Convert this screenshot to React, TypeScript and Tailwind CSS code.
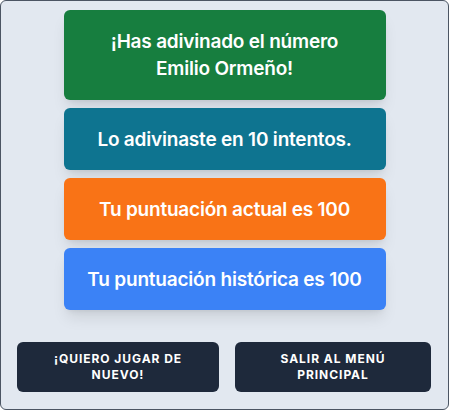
import React from "react";

export default function App() {
  const cards = [
    { text: <>¡Has adivinado el número<br />Emilio Ormeño!</>, bg: "bg-[#177e3f]", h: "h-[90px]" },
    { text: <>Lo adivinaste en 10 intentos.</>, bg: "bg-[#0e7490]", h: "h-[62px]" },
    { text: <>Tu puntuación actual es 100</>, bg: "bg-[#f97316]", h: "h-[62px]" },
    { text: <>Tu puntuación histórica es 100</>, bg: "bg-[#3b82f6]", h: "h-[62px]" },
  ];
  return (
    <div className="w-[449px] h-[410px] bg-white" style={{ fontFamily: "Inter, 'Noto Sans', sans-serif" }}>
      <div className="w-[449px] h-[410px] bg-[#e2e8f0] border border-[#4b5563] rounded-[6px] flex flex-col items-center px-4 pt-[9px]">
        <div className="flex flex-col gap-2 w-[322px]">
          {cards.map((c, i) => (
            <div
              key={i}
              className={`${c.bg} ${c.h} rounded-md shadow-lg flex items-center justify-center text-center text-white text-[19px] leading-[27px] font-semibold tracking-[-0.2px]`}
            >
              <div>{c.text}</div>
            </div>
          ))}
        </div>
        <div className="flex gap-4 w-full mt-[32px]">
          <button className="w-[202px] h-[50px] bg-[#1e293b] rounded-md text-white text-[12px] leading-4 font-bold uppercase tracking-[0.08em]">
            ¡Quiero jugar de<br />nuevo!
          </button>
          <button className="w-[196px] h-[50px] bg-[#1e293b] rounded-md text-white text-[12px] leading-4 font-bold uppercase tracking-[0.08em]">
            Salir al menú<br />principal
          </button>
        </div>
      </div>
    </div>
  );
}
